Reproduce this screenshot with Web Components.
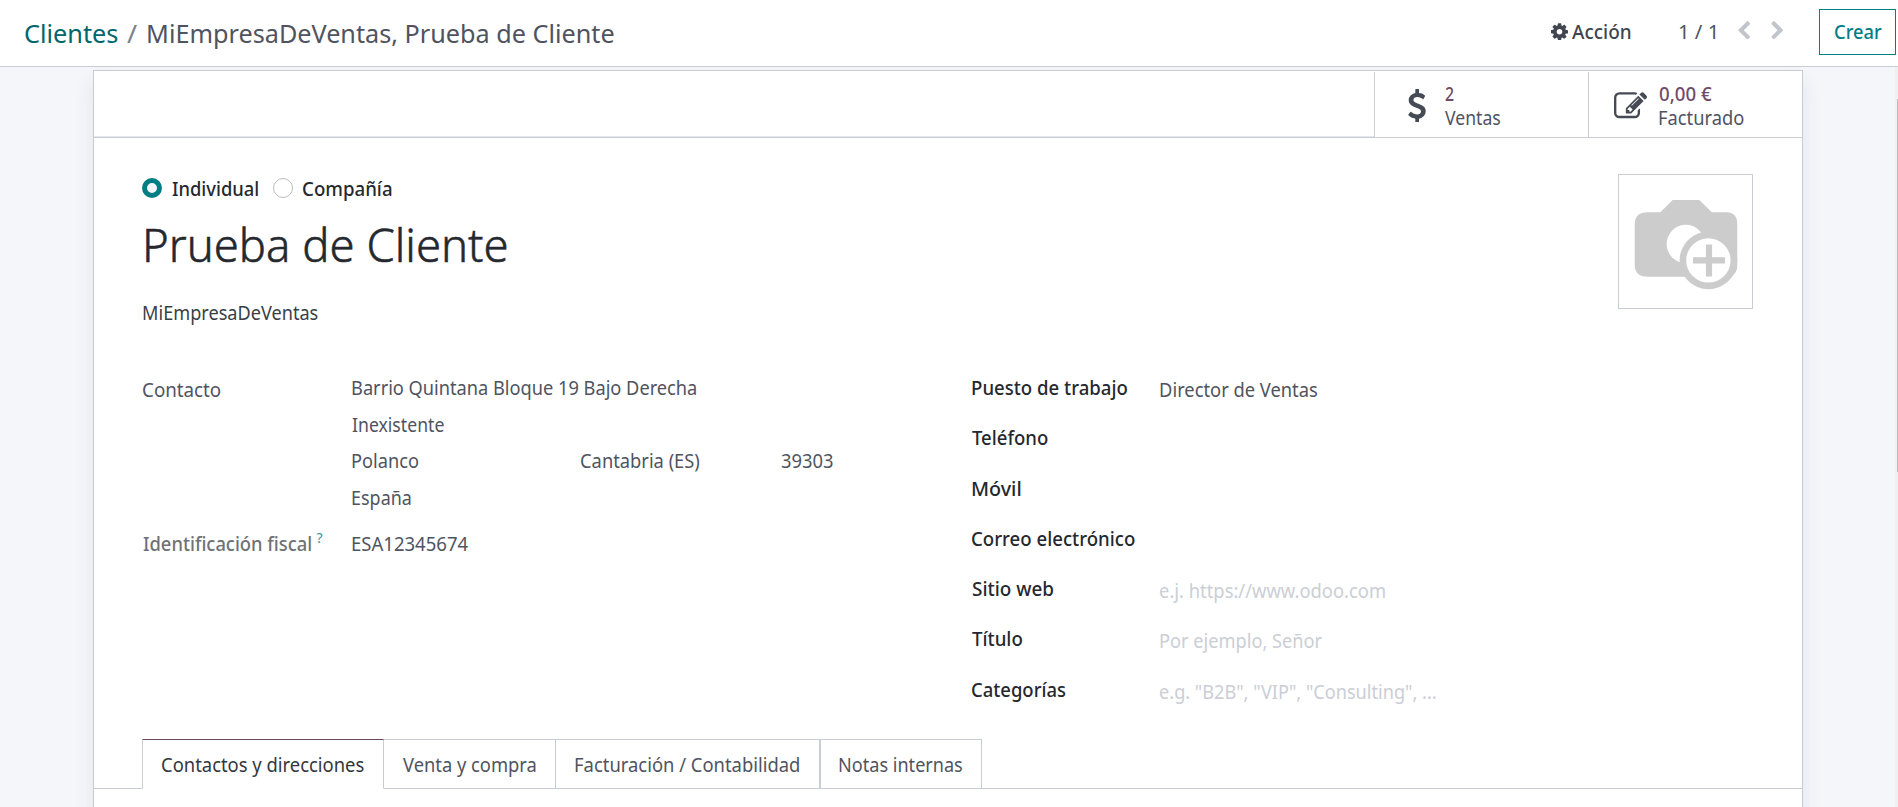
<!DOCTYPE html>
<html lang="es">
<head>
<meta charset="utf-8">
<title>Clientes</title>
<style>
html,body{margin:0;height:100%;overflow:hidden}
body{font:19.4px/30px "Noto Sans","Open Sans",sans-serif;color:#4f545f;background:#f5f6fa}
</style>
</head>
<body>
<contact-page></contact-page>
<script>
const define=(name,html,setup)=>customElements.define(name,class extends HTMLElement{
  constructor(){super();this.attachShadow({mode:'open'}).innerHTML=html;}
  connectedCallback(){if(setup)setup(this,this.shadowRoot);}
});

/* Single-line text condensed to a given visible width */
const pen=document.createElement('canvas').getContext('2d');
define('fit-text','<style>:host{display:block;white-space:nowrap;flex:none}span{display:inline-block;transform-origin:0 50%}</style><span><slot></slot></span>',(el,root)=>{
  const cs=getComputedStyle(el),w=+el.getAttribute('w');
  pen.font=`${cs.fontWeight} ${cs.fontSize} ${cs.fontFamily}`;
  const m=pen.measureText(el.textContent);
  const s=w/(m.actualBoundingBoxLeft+m.actualBoundingBoxRight);
  el.style.width=w+'px';
  root.querySelector('span').style.transform=`translate(${m.actualBoundingBoxLeft*s}px,var(--drop,0px)) scaleX(${s})`;
});

const ICONS={
cog:['128 128 1536 1536','M1152 896q0-106-75-181t-181-75-181 75-75 181 75 181 181 75 181-75 75-181zm512-109v222q0 12-8 23t-20 13l-185 28q-19 54-39 91 35 50 107 138 10 12 10 25t-9 23q-27 37-99 108t-94 71q-12 0-26-9l-138-108q-44 23-91 38-16 136-29 186-7 28-36 28h-222q-14 0-24.5-8.5t-11.5-21.5l-28-184q-49-16-90-37l-141 107q-10 9-25 9-14 0-25-11-126-114-165-168-7-10-7-23 0-12 8-23 15-21 51-66.5t54-70.5q-27-50-41-99l-183-27q-13-2-21-12.5t-8-23.5v-222q0-12 8-23t19-13l186-28q14-46 39-92-40-57-107-138-10-12-10-24 0-10 9-23 26-36 98.5-107.5t94.5-71.5q13 0 26 10l138 107q44-23 91-38 16-136 29-186 7-28 36-28h222q14 0 24.5 8.5t11.5 21.5l28 184q49 16 90 37l142-107q9-9 24-9 13 0 25 10 129 119 165 170 7 8 7 22 0 12-8 23-15 21-51 66.5t-54 70.5q26 50 41 98l183 28q13 2 21 12.5t8 23.5z'],
usd:['430 0 932 1792','M1362 1185q0 153-99.5 263.5t-258.5 136.5v175q0 14-9 23t-23 9h-135q-13 0-22.5-9.5t-9.5-22.5v-175q-66-9-127.5-31t-101.5-44.5-74-48-46.5-37.5-17.5-18q-17-21-2-41l103-135q7-10 23-12 15-2 24 9l2 2q113 99 243 125 37 8 74 8 81 0 142.5-43t61.5-122q0-28-15-53t-33.5-42-58.5-37.5-66-32-80-32.5q-39-16-61.5-25t-61.5-26.5-62.5-31-56.5-35.5-53.5-42.5-43.5-49-35.5-58-21-66.5-8.5-78q0-138 98-242t255-134v-180q0-13 9.5-22.5t22.5-9.5h135q14 0 23 9t9 23v176q57 6 110.5 23t87 33.5 63.5 37.5 39 29 15 14q17 18 5 38l-81 146q-8 15-23 16-14 3-27-7-3-3-14.5-12t-39-26.5-58.5-32-74.5-26-85.5-11.5q-95 0-155 43t-60 111q0 26 8.5 48t29.5 41.5 39.5 33 56 31 60.5 27 70 27.5q53 20 81 31.5t76 35 75.5 42.5 62 50 53 63.5 31.5 76.5 13 94z'],
edit:['0 128 1784 1408','M888 1184l116-116-152-152-116 116v56h96v96h56zm440-720q-16-16-33 1l-350 350q-17 17-1 33t33-1l350-350q17-17 1-33zm80 594v190q0 119-84.5 203.5t-203.5 84.5h-832q-119 0-203.5-84.5t-84.5-203.5v-832q0-119 84.5-203.5t203.5-84.5h832q63 0 117 25 15 7 18 23 3 17-9 29l-49 49q-14 14-32 8-23-6-45-6h-832q-66 0-113 47t-47 113v832q0 66 47 113t113 47h832q66 0 113-47t47-113v-126q0-13 9-22l64-64q15-15 35-7t20 29zm-96-738l288 288-672 672h-288v-288zm444 132l-92 92-288-288 92-92q28-28 68-28t68 28l152 152q28 28 28 68t-28 68z'],
left:['410 26 1036 1612','M1427 301l-531 531 531 531q19 19 19 45t-19 45l-166 166q-19 19-45 19t-45-19l-742-742q-19-19-19-45t19-45l742-742q19-19 45-19t45 19l166 166q19 19 19 45t-19 45z']
};
define('ui-icon','<style>:host{display:block;flex:none}svg{display:block;width:100%;height:100%;fill:currentColor}</style><svg><path/></svg>',(el,root)=>{
  const [box,d]=ICONS[el.getAttribute('name')];
  root.querySelector('svg').setAttribute('viewBox',box);
  root.querySelector('path').setAttribute('d',d);
});

define('control-bar',`<style>
:host{display:flex;align-items:flex-start;height:66px;background:#fff;border-bottom:1px solid #c9ccd4;padding-left:24.5px;box-sizing:content-box}
.crumbs{display:flex;font-size:26px;line-height:40px;margin-top:12.5px}
.crumbs *:nth-child(1){color:#01666b}.crumbs *:nth-child(2){margin:0 10.5px 0 9.5px;color:#7c828b}
.right{display:flex;margin-left:auto;padding-right:2.5px;line-height:30px;padding-top:16.7px}
.act{display:flex;color:#40454f;font-weight:550}
.act ui-icon{width:17px;height:17.5px;margin:6px 4.5px 0 0}
.pg{margin:0 23px 0 48.5px;display:block}
.nav{width:12.4px;height:18.4px;color:#c3c5cd;margin-top:4.2px}
.flip{transform:scaleX(-1);margin:4.2px 35.4px 0 20px}
.btn{box-sizing:border-box;width:77px;height:46px;border:1px solid #017e84;color:#017e84;font-weight:550;padding:6.7px 0 0 15.2px;margin-top:-7.7px}
</style>
<div class="crumbs"><fit-text w="93">Clientes</fit-text><fit-text w="10.5">/</fit-text><fit-text w="466">MiEmpresaDeVentas, Prueba de Cliente</fit-text></div>
<div class="right"><div class="act"><ui-icon name="cog"></ui-icon><fit-text w="58.5">Acción</fit-text></div>
<fit-text class="pg" w="36">1 / 1</fit-text><ui-icon class="nav" name="left"></ui-icon><ui-icon class="nav flip" name="left"></ui-icon>
<div class="btn"><fit-text w="46.5">Crear</fit-text></div></div>`);

define('stat-button',`<style>
:host{display:flex;box-sizing:border-box;width:214px;height:66px;margin-top:1px;border-left:1px solid #c9ccd4;border-bottom:1px solid #c9ccd4;background:#fff}
.i{width:69.9px;flex:none;display:flex;align-items:center;color:#454a55;padding-top:2px}
.t{line-height:24px;padding-top:8.7px}
::slotted([slot=value]){color:#714b67;font-weight:550}
</style><div class="i"><slot name="icon"></slot></div><div class="t"><slot name="value"></slot><slot></slot></div>`);

define('radio-option',`<style>
:host{display:flex;align-items:center;color:#25282e;font-weight:550}
i{box-sizing:border-box;width:20px;height:20px;border-radius:50%;border:1px solid #b9bbc0;margin-right:9.7px}
:host([checked]) i{border:5px solid #017e84;background:#f4f5fb}
</style><i></i><slot></slot>`);

define('image-field',`<style>:host{display:block;box-sizing:border-box;width:135px;height:135px;border:1px solid #c9ccd4}svg{display:block;margin:-1px}</style>
<svg width="135" height="135"><path fill="#ccc" d="M54.7 26h26.6L93.8 38.3h14.5q11 0 11 12v40.4q0 12-11 12H29.7q-13 0-13-12V50.3q0-12 13-12h12.7z"/><circle cx="67.8" cy="70" r="19.2" fill="#fff"/><circle cx="90.4" cy="86.4" r="28.8" fill="#ccc"/><circle cx="90.4" cy="86.4" r="22.2" fill="#fff"/><path fill="#ccc" d="M75 83.2h12.9v-12.7h6.2v12.7H107v6.4H94.1v12.9h-6.2v-12.9H75z"/></svg>`);

define('address-block',`<style>
:host{display:grid;grid-template-columns:209.4px 381px;align-content:start;row-gap:6.8px;padding-top:.8px;box-sizing:border-box}
.k{padding-top:5.1px}.a{line-height:36.8px}.r{display:grid;grid-template-columns:229px 200px 52px}
.id{color:#6e7176;font-weight:550;display:flex;padding-top:5.1px}.id .q{font-size:14px;font-weight:400;color:#35979c;margin:-6px 0 0 6px}
.v{padding-top:5.1px}
</style>
<fit-text class="k" w="77.5">Contacto</fit-text>
<div class="a"><fit-text w="344.5">Barrio Quintana Bloque 19 Bajo Derecha</fit-text><fit-text w="91.5">Inexistente</fit-text>
<div class="r"><fit-text w="66.3">Polanco</fit-text><fit-text w="119">Cantabria (ES)</fit-text><fit-text w="51.5">39303</fit-text></div><fit-text w="59">España</fit-text></div>
<div class="id"><fit-text w="168">Identificación fiscal</fit-text><fit-text class="q" w="6">?</fit-text></div><fit-text class="v" w="116">ESA12345674</fit-text>`);

define('field-row',`<style>
:host{display:grid;grid-template-columns:187.5px auto;height:50.3px}
::slotted([slot=label]){color:#25282e;font-weight:550}
::slotted([slot=hint]){color:#cbced5}
.v{padding-top:1.8px}
</style><slot name="label"></slot><div class="v"><slot></slot><slot name="hint"></slot></div>`);

define('tab-item',`<style>
:host{display:block;box-sizing:border-box;height:50px;border:1px solid #c9ccd4;border-left-width:0;padding:9px 19px 0}
:host([active]){border-left-width:1px;border-top-color:#6b4a63;border-bottom-color:#fff;color:#33373d}
:host([double]){border-left-width:1px;padding:9px 18.5px 0}
</style><slot></slot>`);

define('tab-bar',`<style>
:host{display:flex;padding-left:48px;background:linear-gradient(#c9ccd4,#c9ccd4) 0 100%/100% 1px no-repeat}
</style><slot></slot>`);

define('form-sheet',`<style>
:host{display:block;box-sizing:border-box;width:1710px;height:760px;margin:3px 0 0 93px;background:#fff;border:1px solid #c9ccd4;box-shadow:0 10px 20px rgba(60,60,75,.09);--drop:1px}
.stats{display:flex;justify-content:flex-end;height:67px}
.stats .fill{flex:1;box-sizing:border-box;border-bottom:1px solid #c9ccd4;box-shadow:inset 0 -1px #e6e7eb}
.top{display:flex;justify-content:space-between;padding:35px 48px 0;height:195px;box-sizing:border-box}
.radios{display:flex;height:30px;gap:15.8px}
h1{font-size:45.5px;line-height:60px;font-weight:300;-webkit-text-stroke:.55px;color:#25282e;margin:10px 0 24px 3.5px}
.company{color:#3b3f45;margin-left:1px}
.groups{display:grid;grid-template-columns:829.6px auto;padding:35px 0 0 48.6px;height:406px;box-sizing:border-box}
.fields{padding-top:4px}
.usd{width:18px;height:33.5px;margin-left:33px}.edit{width:33px;height:26.4px;margin-left:25px}
</style>
<div class="stats"><div class="fill"></div>
<stat-button><ui-icon class="usd" slot="icon" name="usd"></ui-icon><fit-text slot="value" w="9">2</fit-text><fit-text w="55.5">Ventas</fit-text></stat-button>
<stat-button><ui-icon class="edit" slot="icon" name="edit"></ui-icon><fit-text slot="value" w="52.5">0,00 €</fit-text><fit-text w="84.5">Facturado</fit-text></stat-button></div>
<div class="top"><div><div class="radios"><radio-option checked><fit-text w="86">Individual</fit-text></radio-option><radio-option><fit-text w="88.5">Compañía</fit-text></radio-option></div>
<h1><fit-text w="360.5">Prueba de Cliente</fit-text></h1><fit-text class="company" w="175">MiEmpresaDeVentas</fit-text></div>
<image-field style="margin:1px 1px 0 0"></image-field></div>
<div class="groups"><address-block></address-block><div class="fields">
<field-row><fit-text slot="label" w="155">Puesto de trabajo</fit-text><fit-text w="157.5">Director de Ventas</fit-text></field-row>
<field-row><fit-text slot="label" w="75.5">Teléfono</fit-text></field-row>
<field-row><fit-text slot="label" w="48.5">Móvil</fit-text></field-row>
<field-row><fit-text slot="label" w="162.5">Correo electrónico</fit-text></field-row>
<field-row><fit-text slot="label" w="81">Sitio web</fit-text><fit-text slot="hint" w="225">e.j. https://www.odoo.com</fit-text></field-row>
<field-row><fit-text slot="label" w="50">Título</fit-text><fit-text slot="hint" w="162">Por ejemplo, Señor</fit-text></field-row>
<field-row><fit-text slot="label" w="93.5">Categorías</fit-text><fit-text slot="hint" w="275.5">e.g. "B2B", "VIP", "Consulting", ...</fit-text></field-row>
</div></div>
<tab-bar><tab-item active><fit-text w="202">Contactos y direcciones</fit-text></tab-item><tab-item><fit-text w="133">Venta y compra</fit-text></tab-item><tab-item><fit-text w="224.5">Facturación / Contabilidad</fit-text></tab-item><tab-item double><fit-text w="123.5">Notas internas</fit-text></tab-item></tab-bar>`);

/* Slim scrollbar over the right edge of the scrolling area */
define('scroll-track',`<style>:host{display:block;position:absolute;right:0;top:67px;bottom:0;width:3px;background:#f0f0f1}i{display:block;width:1px;height:373px;margin:32px 0 0 2px;background:#bdbdbd}</style><i></i>`);

define('contact-page',`<style>:host{display:block;position:relative;height:807px;overflow:hidden}main{height:740px;overflow:hidden;display:flow-root}</style>
<control-bar></control-bar><main><form-sheet></form-sheet></main><scroll-track></scroll-track>`);
</script>
</body>
</html>
